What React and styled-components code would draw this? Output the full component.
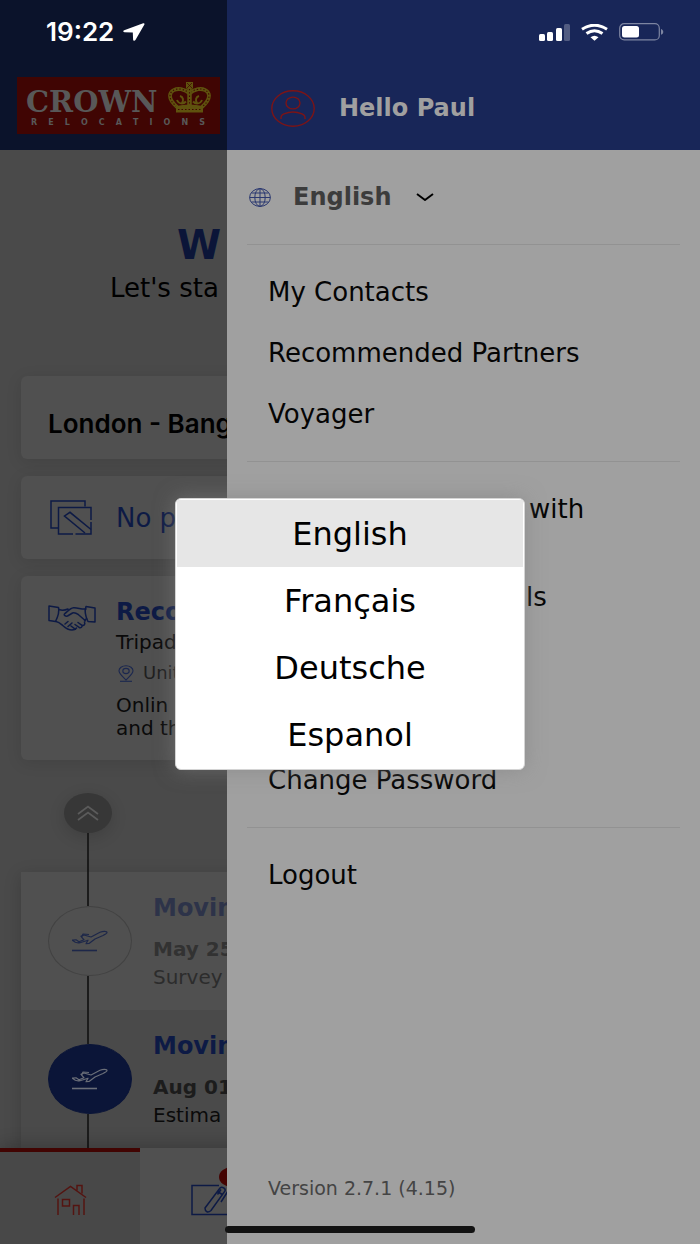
import { useState } from 'react'
import styled, { createGlobalStyle } from 'styled-components'

const GlobalStyle = createGlobalStyle`
  * {
    box-sizing: border-box;
  }
  body {
    margin: 0;
    background-color: #4a4a4a;
    font-family: "DejaVu Sans", sans-serif;
    color: #000;
  }
  h1, h2, p {
    margin: 0;
  }
  button, select {
    font: inherit;
    color: inherit;
    background: none;
    border: 0;
    padding: 0;
  }
  svg {
    display: block;
    flex-shrink: 0;
  }
`
const Phone = styled.div`
  position: relative;
  min-height: 100vh;
  overflow: hidden;
  display: flex;
`

/* status bar */
const StatusBar = styled.div`
  position: absolute;
  z-index: 3;
  top: 0;
  left: 0;
  right: 0;
  height: 64px;
  padding: 0 36px 0 46px;
  display: flex;
  align-items: center;
  color: #fff;
`
const Time = styled.span`
  font-family: Inter, sans-serif;
  font-size: 26px;
  line-height: 32px;
  font-weight: 600;
  margin-right: 9px;
`
const StatusIcons = styled.div`
  margin-left: auto;
  display: flex;
  align-items: center;
  gap: 11px;
`
const HomeIndicator = styled.div`
  position: absolute;
  z-index: 3;
  bottom: 11px;
  left: 50%;
  width: 250px;
  height: 7px;
  margin-left: -125px;
  border-radius: 4px;
  background-color: #121212;
`

/* page behind the drawer */
const Page = styled.main`
  flex: 1;
  display: flex;
  flex-direction: column;
  overflow: hidden;
  white-space: nowrap;
  background-color: #4a4a4a;
`
const PageHeader = styled.header`
  height: 150px;
  padding: 77px 17px 0;
  background-color: #0b132b;
`
const Logo = styled.div`
  width: 203px;
  height: 57px;
  padding: 5px 9px;
  background-color: #400503;
  color: #585858;
`
const LogoTop = styled.div`
  display: flex;
  align-items: flex-start;
  justify-content: space-between;
  height: 34px;
  font-family: "DejaVu Serif", serif;
  font-size: 29px;
  line-height: 40px;
  font-weight: 700;
`
const LogoSub = styled.div`
  display: flex;
  justify-content: space-between;
  padding: 0 6px 0 5px;
  font-size: 8px;
  line-height: 14px;
  font-weight: 700;
`
const Hero = styled.section`
  padding: 70px 20px;
`
const HeroTitle = styled.h1`
  padding-left: 157px;
  font-size: 40px;
  line-height: 50px;
  font-weight: 700;
  color: #0b1538;
`
const HeroText = styled.p`
  padding-left: 90px;
  font-size: 26px;
  line-height: 36px;
`
const Cards = styled.div`
  display: flex;
  flex-direction: column;
  gap: 17px;
  padding: 0 21px;
`
const Card = styled.section`
  display: flex;
  align-items: ${props => props.$top ? 'flex-start' : 'center'};
  min-height: 83px;
  padding: ${props => props.$top ? '20px 27px' : '0 27px'};
  border-radius: 6px;
  background-color: #505050;
  box-shadow: 0 3px 16px rgba(0, 0, 0, .1);
`
const CardIcon = styled.div`
  width: 68px;
  padding: ${props => props.$top ? '8px 0 0' : '0 0 0 2px'};
  flex-shrink: 0;
`
const Route = styled.h2`
  padding-top: 12px;
  font-family: Inter, sans-serif;
  font-size: 26px;
  line-height: 32px;
  font-weight: 600;
`
const CardLink = styled.a`
  font-size: 26px;
  line-height: 32px;
  color: #0d1a45;
  text-decoration: none;
`
const Title = styled.h2`
  font-size: 24px;
  line-height: 32px;
  font-weight: 700;
  color: ${props => props.$faded ? '#2d3349' : '#0d1a45'};
`
const Text = styled.p`
  font-size: 20px;
  line-height: 28px;
  color: ${props => props.$faded ? '#2c2c2c' : '#0a0a0a'};
`
const Place = styled.p`
  display: flex;
  align-items: center;
  gap: 9px;
  padding-left: 2px;
  font-size: 18px;
  line-height: 34px;
  color: #1f1f1f;
`
const Description = styled.p`
  padding-top: 4px;
  font-size: 20px;
  line-height: 23px;
  color: #0a0a0a;
`
const Collapse = styled.div`
  width: 48px;
  margin: 33px 0 0 64px;
  display: flex;
  flex-direction: column;
  align-items: center;
`
const CollapseButton = styled.button`
  width: 48px;
  height: 40px;
  border-radius: 50%;
  display: flex;
  align-items: center;
  justify-content: center;
  background-color: #373737;
  box-shadow: 0 4px 16px rgba(0, 0, 0, .15);
`
const Line = styled.div`
  flex: 1;
  width: 2px;
  min-height: ${props => props.$long ? '39px' : '34px'};
  background-color: #1c1c1c;
`
const Timeline = styled.div`
  flex: 1;
  margin: 0 21px;
  box-shadow: 0 4px 16px rgba(0, 0, 0, .18);
`
const Step = styled.section`
  display: flex;
  gap: 21px;
  padding-left: 27px;
  height: 138px;
  background-color: ${props => props.$done ? '#505050' : '#4a4a4a'};
`
const Marker = styled.div`
  width: 84px;
  display: flex;
  flex-direction: column;
  align-items: center;

  ${Line} {
    margin-right: 4px;
  }
`
const MarkerIcon = styled.div`
  width: 84px;
  height: 70px;
  border-radius: 50%;
  border: 1px solid ${props => props.$done ? '#424242' : '#0b1538'};
  background-color: ${props => props.$done ? '#505050' : '#0b1538'};
  color: ${props => props.$done ? '#1d2749' : '#6a6e78'};
  display: flex;
  align-items: center;
  justify-content: center;
`
const StepBody = styled.div`
  padding-top: 20px;
`
const StepDate = styled.p`
  padding-top: 11px;
  font-size: 20px;
  line-height: 28px;
  font-weight: 700;
  color: ${props => props.$faded ? '#323232' : '#1c1c1c'};
`
const Nav = styled.nav`
  display: flex;
  height: 96px;
  background-color: #505050;
  box-shadow: 0 -4px 16px rgba(0, 0, 0, .2);
`
const Tab = styled.button`
  width: 20%;
  display: flex;
  align-items: center;
  justify-content: center;
  padding-top: 4px;
  border-top: 4px solid ${props => props.$active ? '#410402' : 'transparent'};
  background-color: ${props => props.$active ? '#484848' : 'transparent'};
`
const TabIcon = styled.span`
  position: relative;
`
const Badge = styled.span`
  position: absolute;
  top: -17px;
  right: -16px;
  width: 26px;
  height: 20px;
  border-radius: 50%;
  background-color: #440302;
`

/* drawer */
const Drawer = styled.aside`
  position: absolute;
  z-index: 1;
  top: 0;
  right: 0;
  bottom: 0;
  left: 227px;
  display: flex;
  flex-direction: column;
  background-color: #a0a0a0;
`
const DrawerHeader = styled.header`
  display: flex;
  align-items: center;
  gap: 24px;
  height: 150px;
  padding: 66px 44px 0;
  background-color: #182658;
  font-size: 24px;
  line-height: 32px;
  font-weight: 700;
  color: #a0a0a0;
`
const LanguageRow = styled.label`
  display: flex;
  align-items: center;
  height: 95px;
  margin: 0 20px;
  padding-left: 2px;
  border-bottom: 1px solid #929292;
`
const LanguageSelect = styled.select`
  appearance: none;
  width: 123px;
  margin-left: 22px;
  font-size: 24px;
  line-height: 32px;
  font-weight: 700;
  color: #3c3c3c;
`
const MenuGroup = styled.div`
  margin: 0 20px;
  padding: 17px 21px 16px;
  border-bottom: ${props => props.$last ? '0' : '1px solid #929292'};
`
const MenuItem = styled.a`
  display: block;
  padding: 17px 0;
  font-size: 26px;
  line-height: 27px;
  color: #050505;
  text-decoration: none;
`
const Version = styled.p`
  margin-top: auto;
  padding: 0 41px 44px;
  font-size: 19px;
  line-height: 24px;
  color: #444;
`

/* language popup */
const Overlay = styled.div`
  position: absolute;
  z-index: 2;
  inset: 0;
  display: flex;
  align-items: center;
  justify-content: center;
  padding-top: 24px;
`
const Popup = styled.div`
  width: 50%;
  padding: 1px;
  border-radius: 6px;
  overflow: hidden;
  background-color: #fff;
  border: 1px solid #d4d4d4;
  box-shadow: 0 0 20px rgba(128, 128, 128, .6);
`
const Option = styled.button`
  display: block;
  width: 100%;
  height: 67px;
  font-size: 32px;
  line-height: 40px;
  text-align: center;
  color: #000;
  background-color: ${props => props.$selected ? '#e6e6e6' : '#fff'};
`

const languages = ['English', 'Français', 'Deutsche', 'Espanol']

const menu = [
  ['My Contacts', 'Recommended Partners', 'Voyager'],
  ['Get a bit more help with relocation', 'View Personal Details', 'My Services', 'Notifications', 'Change Password'],
  ['Logout'],
]

const steps = [
  { title: 'Moving', date: 'May 25', text: 'Survey', done: true },
  { title: 'Moving', date: 'Aug 01', text: 'Estima', done: false },
]

function LocationArrow() {
  return (
    <svg width="22" height="18" viewBox="0 0 22 18" fill="#fff">
      <path d="M20.200.2 1.200 7.200c-1.500.6-1.300 2 .3 2.100l8.300.2.3 7c.1 1.500 1.700 1.700 2.500.3L21.400 1.500c.4-.9-.2-1.600-1.200-1.300z" />
    </svg>
  )
}

function Signal() {
  return (
    <svg width="31" height="17" viewBox="0 0 31 17" fill="#fff">
      <rect x="0" y="10" width="6" height="7" rx="1.500" />
      <rect x="8" y="8" width="6" height="9" rx="1.500" />
      <rect x="17" y="4" width="6" height="13" rx="1.500" />
      <rect x="25" y="0" width="6" height="17" rx="1.500" opacity=".25" />
    </svg>
  )
}

function Wifi() {
  return (
    <svg width="27" height="17" viewBox="0 0 27 17" fill="none" stroke="#fff" strokeWidth="3">
      <path d="M1 5.200Q13.500-2.800 26 5.200" />
      <path d="M5.500 9.600Q13.500 4 21.500 9.600" />
      <path d="M9.500 13.200Q13.500 10.200 17.500 13.200L13.500 16.800z" fill="#fff" stroke="none" />
    </svg>
  )
}

function Battery() {
  return (
    <svg width="45" height="18" viewBox="0 0 45 18">
      <rect x=".7" y=".7" width="39.600" height="16.200" rx="4.500" fill="none" stroke="#7d85a1" strokeWidth="1.200" />
      <rect x="3" y="3" width="17" height="11.600" rx="2.500" fill="#fff" />
      <path d="M42 6c3 .8 3 5 0 5.800z" fill="#7d85a1" />
    </svg>
  )
}

function Crown() {
  return (
    <svg width="43" height="31" viewBox="0 0 43 31" fill="none" stroke="#5f520e">
      <rect x="18.500" y=".5" width="6" height="5.500" fill="#5f520e" />
      <path d="m19 1 5 5m0-5-5 5" stroke="#400503" strokeWidth=".7" />
      <path d="M9 25C5 21.500 1.800 18 2 13.500 2.300 8.500 8 6.300 13 7.200c4 .8 6.500 2.300 8.500 4.300 2-2 4.500-3.500 8.500-4.300 5-.9 10.700 1.300 11 6.300.2 4.500-3 8-7 11.500" strokeWidth="3.800" />
      <path d="M9 25C5 21.500 1.800 18 2 13.500 2.300 8.500 8 6.300 13 7.200c4 .8 6.500 2.300 8.500 4.300 2-2 4.500-3.500 8.500-4.300 5-.9 10.700 1.300 11 6.300.2 4.500-3 8-7 11.500" stroke="#400503" strokeWidth="1.100" strokeDasharray="1.300 2" />
      <path d="M21.500 6v19" strokeWidth="4.500" />
      <path d="M21.500 7v17" stroke="#400503" strokeWidth="1.100" strokeDasharray="1.300 2" />
      <path d="M12 14c3 1 4 4 2 7m-5-3c1 2.500 3 3.500 5 3.500 2 0 3-1 4-2M31 14c-3 1-4 4-2 7m5-3c-1 2.500-3 3.500-5 3.500-2 0-3-1-4-2" strokeWidth="2" />
      <path d="M8 24q13.500-3 27 0v6.500H8z" fill="#5f520e" stroke="none" />
      <path d="M10 27.500h23" stroke="#400503" strokeWidth="1.200" strokeDasharray="1.500 2" />
    </svg>
  )
}

function UserIcon() {
  return (
    <svg width="44" height="37" viewBox="0 0 44 37" fill="none" stroke="#7c1416" strokeWidth="1.400">
      <ellipse cx="22" cy="18.500" rx="21.200" ry="17.700" />
      <ellipse cx="22" cy="13" rx="7" ry="5.900" />
      <path d="M10 29v-1.500c0-2 1-2.800 3-3.600 5.500-2.300 12.500-2.300 18 0 2 .8 3 1.600 3 3.600V29" />
    </svg>
  )
}

function Globe() {
  return (
    <svg width="22" height="19" viewBox="0 0 22 19" fill="none" stroke="#2b3870" strokeWidth="1">
      <ellipse cx="11" cy="9.500" rx="10.400" ry="8.900" />
      <ellipse cx="11" cy="9.500" rx="5.200" ry="8.900" />
      <path d="M11 .6v17.800M.6 9.500h20.800M2.500 5h17M2.500 14h17" />
    </svg>
  )
}

function Chevron() {
  return (
    <svg width="18" height="10" viewBox="0 0 18 10" fill="none" stroke="#000" strokeWidth="2" strokeLinejoin="round">
      <path d="m1 2 8 6 8-6" />
    </svg>
  )
}

function Plans() {
  return (
    <svg width="42" height="35" viewBox="0 0 42 35" fill="none" stroke="#0d1a45" strokeWidth="1.500">
      <path d="M8 28H1V1h34v5.500" />
      <path d="M23 34H8.500V7.500H41V20M41 22v12H25.500" />
      <path d="m35 33-20.500-17 5.500-3.700L41 29.500M14.500 16l5.500-3.700" />
    </svg>
  )
}

function Handshake() {
  return (
    <svg width="48" height="27" viewBox="0 0 48 27" fill="none" stroke="#0d1a45" strokeWidth="1.500" strokeLinejoin="round" strokeLinecap="round">
      <path d="m1 2 9.500 1.500c1 4-.5 9-3 14L1 16.500zM47 4l-9-1.500c-1.500 4-.5 10 2 15l7 .5z" />
      <path d="M11 5.500c3 1.200 6 .8 9-.5M38 5c-5 .5-8-1.500-12.500-1.200-3 .2-5.500 3-9 6.200-1 1.200 1 2.500 3 2l5-3c2-.7 4 .3 6 1.700l7 6M38.500 14.500l-2 2.500" />
      <path d="M8 17.500c3 .5 5 2.500 7 4.200 2.500 2.300 5 4.300 9 4.300 2 0 3.500-.7 4.500-2M30 18.500l4 2.800c2 .6 3.500-1 2.500-3M27 20.500l4.500 3.200c1.500.4 3-.7 2.500-2.500M23 22l4.500 3.300M17 20l3-2.500M20 22.500l4-3.500" />
    </svg>
  )
}

function Pin() {
  return (
    <svg width="16" height="17" viewBox="0 0 16 17" fill="none" stroke="#1b274f" strokeWidth="1.100">
      <path d="M8 15C4 11 1 8.800 1 5.800 1 3 4 .7 8 .7s7 2.300 7 5.100c0 3-3 5.200-7 9.200z" />
      <ellipse cx="8" cy="6" rx="3.200" ry="2.600" />
      <path d="M2 16.300h12" />
    </svg>
  )
}

function DoubleUp() {
  return (
    <svg width="22" height="16" viewBox="0 0 22 16" fill="none" stroke="#5b5b5b" strokeWidth="1.800">
      <path d="m1 9 10-7.500L21 9M1 15l10-7.500L21 15" />
    </svg>
  )
}

function Plane() {
  return (
    <svg width="36" height="22" viewBox="0 0 36 22" fill="none" stroke="currentColor" strokeWidth="1.200" strokeLinejoin="round">
      <path d="M1 10l3-.2 3 2 5-2-3-3.500 3-1.300 7 2 9-4.800c3-1.200 7-1.200 7 .3 0 1-2 2-4 3l-8 3.500-6 4.500-3 .2 2-3.500-8 2.500c-3 .6-6-.7-8-2.700z" />
      <path d="M10 6.500l1-2.500 6 .5" />
      <path d="M0 20.500h25" strokeWidth="1.600" />
    </svg>
  )
}

function House() {
  return (
    <svg width="33" height="32" viewBox="0 0 33 32" fill="none" stroke="#541411" strokeWidth="1.500">
      <path d="M1 13.500 16.500 2.500 32 13.500M4 14.500V31M30 14.500V31" />
      <path d="M23 6.500V1.500h5v8M8.500 15.500h7v6.500h-7zM19.500 31v-9.500H25V31" />
    </svg>
  )
}

function Sign() {
  return (
    <svg width="38" height="32" viewBox="0 0 38 32" fill="none" stroke="#0d1a45" strokeWidth="1.500">
      <path d="M28 1.500H1v29h36V18" />
      <path d="m14 24 15-20c2-2 6 .5 5 3L20 26.500c-3 2.500-6 1.500-6-2.500zM26.500 7.500l5.500 3.500M30 5.500l-3.500 5M37 7l-7 11" />
    </svg>
  )
}

function LanguagePopup({ value, onSelect }) {
  return (
    <Overlay>
      <Popup role="listbox" aria-label="Language">
        {languages.map(name => (
          <Option
            key={name}
            type="button"
            role="option"
            aria-selected={name === value}
            $selected={name === value}
            onClick={() => onSelect(name)}
          >
            {name}
          </Option>
        ))}
      </Popup>
    </Overlay>
  )
}

function SideMenu({ language, onLanguage }) {
  return (
    <Drawer>
      <DrawerHeader>
        <UserIcon />
        <span>Hello Paul</span>
      </DrawerHeader>
      <LanguageRow htmlFor="language">
        <Globe />
        <LanguageSelect
          id="language"
          aria-label="Language"
          value={language}
          onChange={e => onLanguage(e.target.value)}
        >
          {languages.map(name => <option key={name}>{name}</option>)}
        </LanguageSelect>
        <Chevron />
      </LanguageRow>
      {menu.map((group, i) => (
        <MenuGroup key={i} $last={i === menu.length - 1}>
          {group.map(item => <MenuItem key={item} href="#">{item}</MenuItem>)}
        </MenuGroup>
      ))}
      <Version>Version 2.7.1 (4.15)</Version>
    </Drawer>
  )
}

function TimelineStep({ title, date, text, done }) {
  return (
    <Step $done={done}>
      <Marker>
        <Line />
        <MarkerIcon $done={done}><Plane /></MarkerIcon>
        <Line />
      </Marker>
      <StepBody>
        <Title $faded={done}>{title}</Title>
        <StepDate $faded={done}>{date}</StepDate>
        <Text $faded={done}>{text}</Text>
      </StepBody>
    </Step>
  )
}

export default function App() {
  const [language, setLanguage] = useState('English')

  return (
    <Phone>
      <GlobalStyle />
      <StatusBar>
        <Time>19:22</Time>
        <LocationArrow />
        <StatusIcons>
          <Signal />
          <Wifi />
          <Battery />
        </StatusIcons>
      </StatusBar>

      <Page>
        <PageHeader>
          <Logo>
            <LogoTop>
              CROWN
              <Crown />
            </LogoTop>
            <LogoSub>
              {'RELOCATIONS'.split('').map((letter, i) => <span key={i}>{letter}</span>)}
            </LogoSub>
          </Logo>
        </PageHeader>
        <Hero>
          <HeroTitle>W</HeroTitle>
          <HeroText>Let's sta</HeroText>
        </Hero>
        <Cards>
          <Card>
            <Route>London - Bang</Route>
          </Card>
          <Card>
            <CardIcon><Plans /></CardIcon>
            <CardLink href="#">No p</CardLink>
          </Card>
          <Card $top>
            <CardIcon $top><Handshake /></CardIcon>
            <div>
              <Title>Reco</Title>
              <Text>Tripad</Text>
              <Place><Pin />Unit</Place>
              <Description>Onlin<br />and th</Description>
            </div>
          </Card>
        </Cards>
        <Collapse>
          <CollapseButton type="button" aria-label="Collapse"><DoubleUp /></CollapseButton>
          <Line $long />
        </Collapse>
        <Timeline>
          {steps.map(step => <TimelineStep key={step.date} {...step} />)}
        </Timeline>
        <Nav>
          <Tab type="button" aria-label="Home" $active>
            <TabIcon><House /></TabIcon>
          </Tab>
          <Tab type="button" aria-label="Documents">
            <TabIcon><Sign /><Badge /></TabIcon>
          </Tab>
        </Nav>
      </Page>

      <SideMenu language={language} onLanguage={setLanguage} />
      <LanguagePopup value={language} onSelect={setLanguage} />
      <HomeIndicator />
    </Phone>
  )
}
